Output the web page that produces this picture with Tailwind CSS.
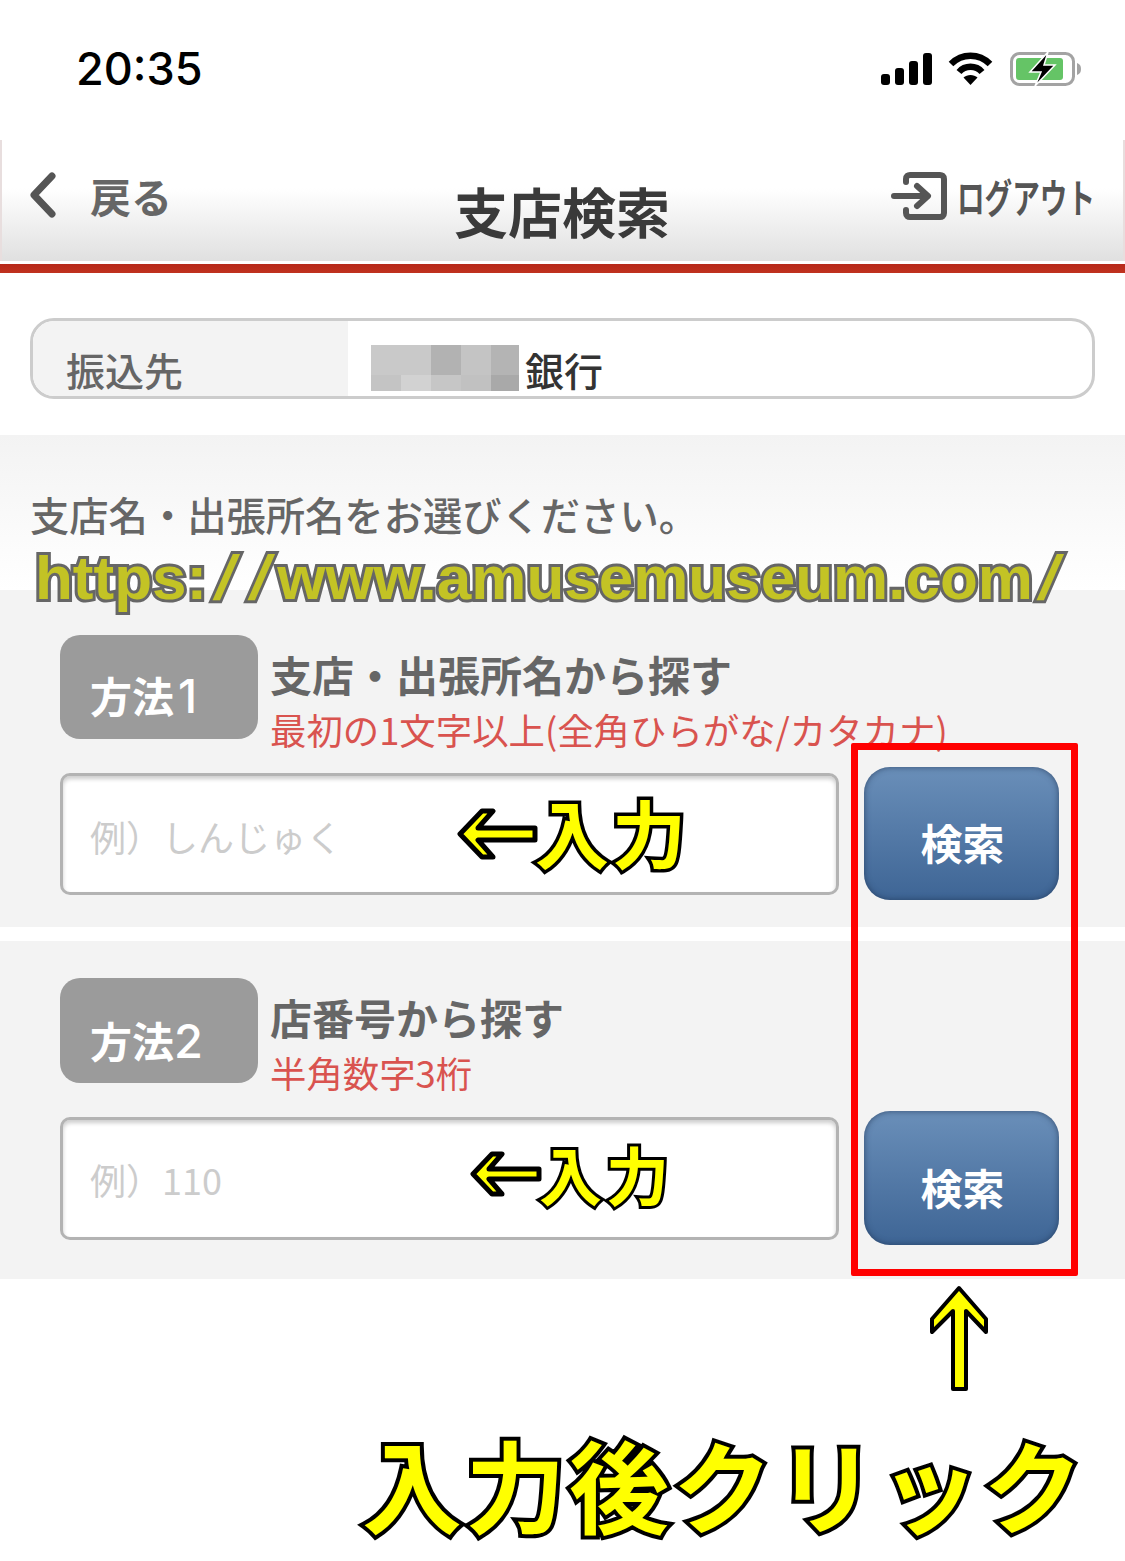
<!DOCTYPE html>
<html lang="ja">
<head>
  <meta charset="UTF-8" />
  <meta name="viewport" content="width=device-width, initial-scale=1.0"/>
  <title>支店検索</title>
  <script src="https://cdn.jsdelivr.net/npm/@tailwindcss/browser@4"></script>
</head>
<body class="bg-white font-['Noto_Sans_CJK_JP',sans-serif]">
  <div class="relative w-[1125px] h-[1561px] overflow-hidden bg-white">

    <!-- status bar -->
    <div class="h-[140px] flex justify-between pl-[76px] pr-[43px]">
      <span class="mt-[39px] text-[45px] leading-[60px] font-medium text-black font-['Inter',sans-serif]">20:35</span>
      <div class="flex items-start pt-[52px]">
        <svg width="52" height="33" viewBox="0 0 52 33" fill="#000">
          <rect x="0" y="22" width="9" height="11" rx="3"/>
          <rect x="14" y="16" width="9" height="17" rx="3"/>
          <rect x="28" y="9" width="9" height="24" rx="3"/>
          <rect x="42" y="1" width="9" height="32" rx="3"/>
        </svg>
        <svg class="ml-[15px]" width="45" height="33" viewBox="0 0 45 33" fill="none" stroke="#000" stroke-width="6.5">
          <path d="M3 12 C14 1 31 1 42 12"/>
          <path d="M11 20 C17 13 28 13 34 20"/>
          <path d="M22.500 33 L15.500 25.500 C19 22 26 22 29.500 25.500 Z" fill="#000" stroke="none"/>
        </svg>
        <svg class="ml-[17px]" width="72" height="34" viewBox="0 0 72 34" fill="none">
          <rect x="1.500" y="1.500" width="62" height="31" rx="8" stroke="#a3a3a3" stroke-width="3"/>
          <rect x="6" y="6" width="47" height="22" rx="3" fill="#65c466"/>
          <path d="M67 11 C70 12 71 14 71 17 C71 20 70 22 67 23 Z" fill="#a3a3a3"/>
          <path d="M38 0 L20 20 L31 20 L25 34 L45 13 L34 13 Z" fill="#000" stroke="#fff" stroke-width="1.500"/>
        </svg>
      </div>
    </div>

    <!-- header -->
    <header class="relative h-[121px] bg-gradient-to-b from-white from-40% to-[#e0e0e0] border-x-2 border-[#e8dede] flex items-start justify-between pl-[26px] pr-[28px]">
      <div class="flex items-center pt-[30px]">
        <svg width="30" height="46" viewBox="0 0 30 46" fill="none" stroke="#555" stroke-width="7" stroke-linecap="round" stroke-linejoin="round">
          <path d="M24 4 L6 23 L24 42"/>
        </svg>
        <span class="ml-[32px] text-[41px] leading-[50px] font-bold text-[#666]">戻る</span>
      </div>
      <h1 class="absolute left-[452px] top-[39px] text-[54px] leading-[64px] font-bold text-[#3a3a3a]">支店検索</h1>
      <div class="flex items-start pt-[32px]">
        <svg width="56" height="48" viewBox="0 0 56 48" fill="none" stroke="#555" stroke-width="6" stroke-linecap="round" stroke-linejoin="round">
          <path d="M15 10 V7 C15 4 17 3 19 3 H49 C51 3 53 4 53 7 V41 C53 44 51 45 49 45 H19 C17 45 15 44 15 41 V38"/>
          <path d="M3 24 H36"/>
          <path d="M26 14 L37 24 L26 34"/>
        </svg>
        <span class="block w-[138px] ml-[10px] text-[40px] leading-[48px] font-bold text-[#555] whitespace-nowrap scale-x-[.69] origin-left">ログアウト</span>
      </div>
    </header>
    <div class="h-[3px] bg-white"></div>
    <div class="h-[9px] bg-gradient-to-b from-[#b7281a] to-[#c0321f]"></div>

    <!-- payee -->
    <section class="h-[162px] pt-[45px] px-[30px]">
      <div class="h-[81px] w-[1065px] border-[3px] border-[#cccccc] rounded-[24px] overflow-hidden flex">
        <div class="w-[315px] bg-[#f3f3f3] pl-[33px] pt-[23px] text-[39px] leading-[50px] font-medium text-[#666]">振込先</div>
        <div class="flex items-start pl-[23px] pt-[24px]">
          <div class="w-[148px] h-[46px] grid grid-cols-[30px_30px_30px_30px_28px] grid-rows-[30px_16px]">
            <i class="bg-[#c9c9c9]"></i><i class="bg-[#c9c9c9]"></i><i class="bg-[#b2b2b2]"></i><i class="bg-[#c4c4c4]"></i><i class="bg-[#b4b4b4]"></i>
            <i class="bg-[#c4c4c4]"></i><i class="bg-[#d2d2d2]"></i><i class="bg-[#c6c6c6]"></i><i class="bg-[#c1c1c1]"></i><i class="bg-[#a9a9a9]"></i>
          </div>
          <span class="ml-[6px] -mt-[1px] text-[39px] leading-[50px] font-medium text-[#333]">銀行</span>
        </div>
      </div>
    </section>

    <!-- lead -->
    <div class="h-[155px] bg-gradient-to-b from-[#f3f3f3] to-white pl-[30px] pt-[54px] text-[39.300px] leading-[50px] font-medium text-[#666] whitespace-nowrap">支店名・出張所名をお選びください。</div>

    <!-- method 1 -->
    <section class="h-[337px] bg-[#f3f3f3] pl-[60px] pr-[66px] pt-[45px]">
      <div class="flex items-start h-[104px]">
        <div class="w-[198px] h-[104px] rounded-[20px] bg-[#9b9b9b] pl-[30px] pt-[33px] text-[42px] leading-[54px] font-bold text-white">方法<span class="ml-[4px] font-['Inter',sans-serif] font-medium text-[46px]">1</span></div>
        <div class="ml-[12px]">
          <div class="text-[42px] leading-[54px] mt-[12px] font-bold text-[#666] whitespace-nowrap">支店・出張所名から探す</div>
          <div class="text-[36.400px] leading-[46px] mt-[5px] text-[#d9534f] whitespace-nowrap">最初の1文字以上(全角ひらがな/カタカナ)</div>
        </div>
      </div>
      <div class="flex items-start justify-between mt-[28px]">
        <input type="text" placeholder="例）しんじゅく" class="mt-[6px] w-[779px] h-[122px] px-[27px] pt-[4px] bg-white border-[3px] border-[#b3b3b3] rounded-[10px] shadow-[inset_0_3px_4px_rgba(0,0,0,0.2)] text-[36px] placeholder:text-[#cccccc]" />
        <button class="w-[195px] h-[133px] pl-[2px] rounded-[26px] bg-gradient-to-b from-[#6a8fb9] to-[#3e6595] shadow-[inset_0_0_6px_rgba(30,50,80,0.7)] pt-[16px] text-[42px] leading-[50px] font-bold text-white">検索</button>
      </div>
    </section>

    <div class="h-[14px] bg-white"></div>

    <!-- method 2 -->
    <section class="h-[338px] bg-[#f3f3f3] pl-[60px] pr-[66px] pt-[37px]">
      <div class="flex items-start h-[105px]">
        <div class="w-[198px] h-[105px] rounded-[20px] bg-[#9b9b9b] pl-[30px] pt-[35px] text-[42px] leading-[54px] font-bold text-white">方法<span class="font-['Inter',sans-serif] font-medium text-[47px]">2</span></div>
        <div class="ml-[12px]">
          <div class="text-[42px] leading-[54px] mt-[12px] font-bold text-[#666] whitespace-nowrap">店番号から探す</div>
          <div class="text-[36.400px] leading-[46px] mt-[5px] text-[#d9534f] whitespace-nowrap">半角数字3桁</div>
        </div>
      </div>
      <div class="flex items-start justify-between mt-[28px]">
        <input type="text" placeholder="例）110" class="mt-[6px] w-[779px] h-[123px] px-[27px] pt-[0px] bg-white border-[3px] border-[#b3b3b3] rounded-[10px] shadow-[inset_0_3px_4px_rgba(0,0,0,0.2)] text-[36px] placeholder:text-[#cccccc]" />
        <button class="w-[195px] h-[134px] pl-[2px] rounded-[26px] bg-gradient-to-b from-[#6a8fb9] to-[#3e6595] shadow-[inset_0_0_6px_rgba(30,50,80,0.7)] pt-[18px] text-[42px] leading-[50px] font-bold text-white">検索</button>
      </div>
    </section>

    <!-- annotations drawn over the page -->
    <div class="absolute left-[35px] top-[536px] flex items-baseline text-[62px] leading-[84px] font-bold whitespace-nowrap text-[#c3c325] font-['Liberation_Sans',sans-serif] [-webkit-text-stroke:6px_#666] [paint-order:stroke_fill]">
      <span>https:</span>
      <span class="inline-block w-[38px] text-center skew-x-[-14deg]">/</span>
      <span class="inline-block w-[32px] text-center skew-x-[-14deg]">/</span>
      <span>www.amusemuseum.com</span>
      <span class="inline-block w-[34px] text-center skew-x-[-14deg]">/</span>
    </div>

    <div class="absolute left-[851px] top-[743px] w-[227px] h-[533px] border-[7px] border-[#ff0000] rounded-[2px]"></div>

    <svg class="absolute left-[456px] top-[808px]" width="84" height="52" viewBox="0 0 84 52" fill="#ffff00" stroke="#000" stroke-width="5" stroke-linejoin="round">
      <path d="M26 3 L4 26 L26 49 L37 49 L22 32 L79 32 L79 20 L22 20 L37 3 Z"/>
    </svg>
    <div class="absolute left-[535px] top-[781px] text-[74px] leading-[100px] tracking-[3px] font-bold text-[#ffff00] whitespace-nowrap [-webkit-text-stroke:7px_#000] [paint-order:stroke_fill]">入力</div>

    <svg class="absolute left-[469px] top-[1151px]" width="74" height="46" viewBox="0 0 74 46" fill="#ffff00" stroke="#000" stroke-width="5" stroke-linejoin="round">
      <path d="M23 3 L4 23 L23 43 L33 43 L20 28 L70 28 L70 18 L20 18 L33 3 Z"/>
    </svg>
    <div class="absolute left-[539px] top-[1129px] text-[63px] leading-[88px] tracking-[4px] font-bold text-[#ffff00] whitespace-nowrap [-webkit-text-stroke:6px_#000] [paint-order:stroke_fill]">入力</div>

    <svg class="absolute left-[929px] top-[1285px]" width="60" height="108" viewBox="0 0 60 108" fill="#ffff00" stroke="#000" stroke-width="4" stroke-linejoin="round">
      <path d="M30 3 L57 34 L57 47 L37 26 L37 104 L24 104 L24 26 L3 47 L3 34 Z"/>
    </svg>

    <div class="absolute left-[362px] top-[1418px] text-[100px] leading-[130px] tracking-[3.500px] font-bold text-[#ffff00] whitespace-nowrap [-webkit-text-stroke:8px_#000] [paint-order:stroke_fill]">入力後クリック</div>
  </div>
</body>
</html>
